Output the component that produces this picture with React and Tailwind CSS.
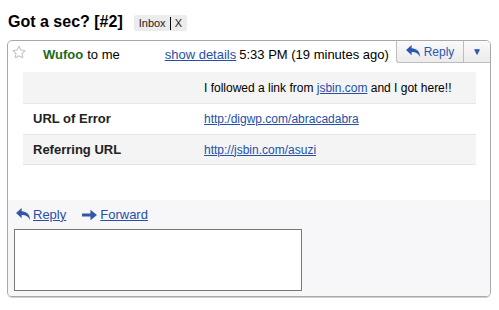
import { FaRegStar } from 'react-icons/fa';

function ReplyArrow({ className }) {
  return (
    <svg viewBox="0 0 16 14" className={className} fill="currentColor">
      <path d="M6 0 L0 5.5 L6 11 L6 7.5 C10 7.5 13 8.5 15 13 C15 7 11.5 3.8 6 3.6 Z" />
    </svg>
  );
}

function RightArrow({ className }) {
  return (
    <svg viewBox="0 0 16 12" className={className} fill="currentColor">
      <path d="M0 4.5 H9 V0.5 L16 6 L9 11.5 V7.5 H0 Z" />
    </svg>
  );
}

const rows = [
  { label: '', value: null },
  { label: 'URL of Error', value: 'http:/digwp.com/abracadabra' },
  { label: 'Referring URL', value: 'http://jsbin.com/asuzi' },
];

export default function App() {
  return (
    <div className="w-[499px] h-[310px] bg-white text-[13px] text-black overflow-hidden" style={{ fontFamily: '"Liberation Sans", Arial, sans-serif' }}>
      <div className="flex items-center pl-[8px] pt-[11px] h-[40px]">
        <h1 className="text-[16px] font-bold leading-none pb-[6px] scale-y-[1.08] origin-bottom">Got a sec? [#2]</h1>
        <div className="ml-[11px] mb-[5px] flex items-center bg-[#ececec] rounded-[2px] h-[16px] px-[5px] text-[11px] text-[#222]">
          <span>Inbox</span>
          <span className="mx-[4px] h-[13px] w-px bg-black" />
          <span>X</span>
        </div>
      </div>

      <div className="ml-[7px] w-[484px] h-[257px] border border-[#a9a9a9] rounded-[5px] shadow-[0_1px_0_#d0d0d0] flex flex-col overflow-hidden">
        <div className="flex items-start h-[31px]">
          <FaRegStar className="mt-[4px] ml-[4px] w-[14px] h-[14px] text-[#c8c8c8]" />
          <div className="ml-[17px] mt-[4px] flex items-baseline">
            <span className="font-bold text-[#1d6b1d]">Wufoo</span>
            <span className="ml-[4px]">to me</span>
            <a className="ml-[45px] text-[#2550a8] underline">show details</a>
            <span className="ml-[3px]">5:33 PM (19 minutes ago)</span>
          </div>
          <div className="ml-auto flex h-[22px]">
            <button className="flex items-center gap-[3px] w-[67px] justify-center border-l border-b border-[#bdbdbd] rounded-bl-[3px] bg-gradient-to-b from-[#fafafa] to-[#ebebeb] text-[#2a57b0] text-[12px]">
              <ReplyArrow className="w-[15px] h-[13px] text-[#2a57b0]" />
              <span>Reply</span>
            </button>
            <button className="w-[27px] flex items-center justify-center border-l border-b border-[#bdbdbd] bg-gradient-to-b from-[#fafafa] to-[#ebebeb] text-[#2a57b0] text-[10px]">
              ▼
            </button>
          </div>
        </div>

        <div className="ml-[15px] mr-[14px]">
          {rows.map((r, i) => (
            <div key={i} className={`flex h-[31px] items-center ${i % 2 === 0 ? 'bg-[#f4f4f4]' : 'bg-white'} ${i > 0 ? 'border-t border-[#e6e6e6]' : ''} ${i === 2 ? 'border-b border-[#e6e6e6]' : ''}`}>
              <div className="w-[181px] pl-[10px] font-bold text-[#222]">{r.label}</div>
              {r.value ? (
                <a className="text-[#2550a8] underline text-[12px]">{r.value}</a>
              ) : (
                <div className="text-[12px]">
                  I followed a link from <a className="text-[#2550a8] underline">jsbin.com</a> and I got here!!
                </div>
              )}
            </div>
          ))}
        </div>

        <div className="mt-auto h-[96px] bg-[#f7f7f9] flex flex-col">
          <div className="flex items-center h-[28px] pl-[8px] pt-[1px]">
            <ReplyArrow className="w-[15px] h-[13px] text-[#3257a8]" />
            <a className="ml-[2px] text-[#2550a8] underline">Reply</a>
            <RightArrow className="ml-[16px] w-[15px] h-[12px] text-[#3257a8]" />
            <a className="ml-[3px] text-[#2550a8] underline">Forward</a>
          </div>
          <div className="mt-[1px] ml-[6px] w-[288px] h-[62px] border border-[#777] bg-white" />
        </div>
      </div>
    </div>
  );
}
